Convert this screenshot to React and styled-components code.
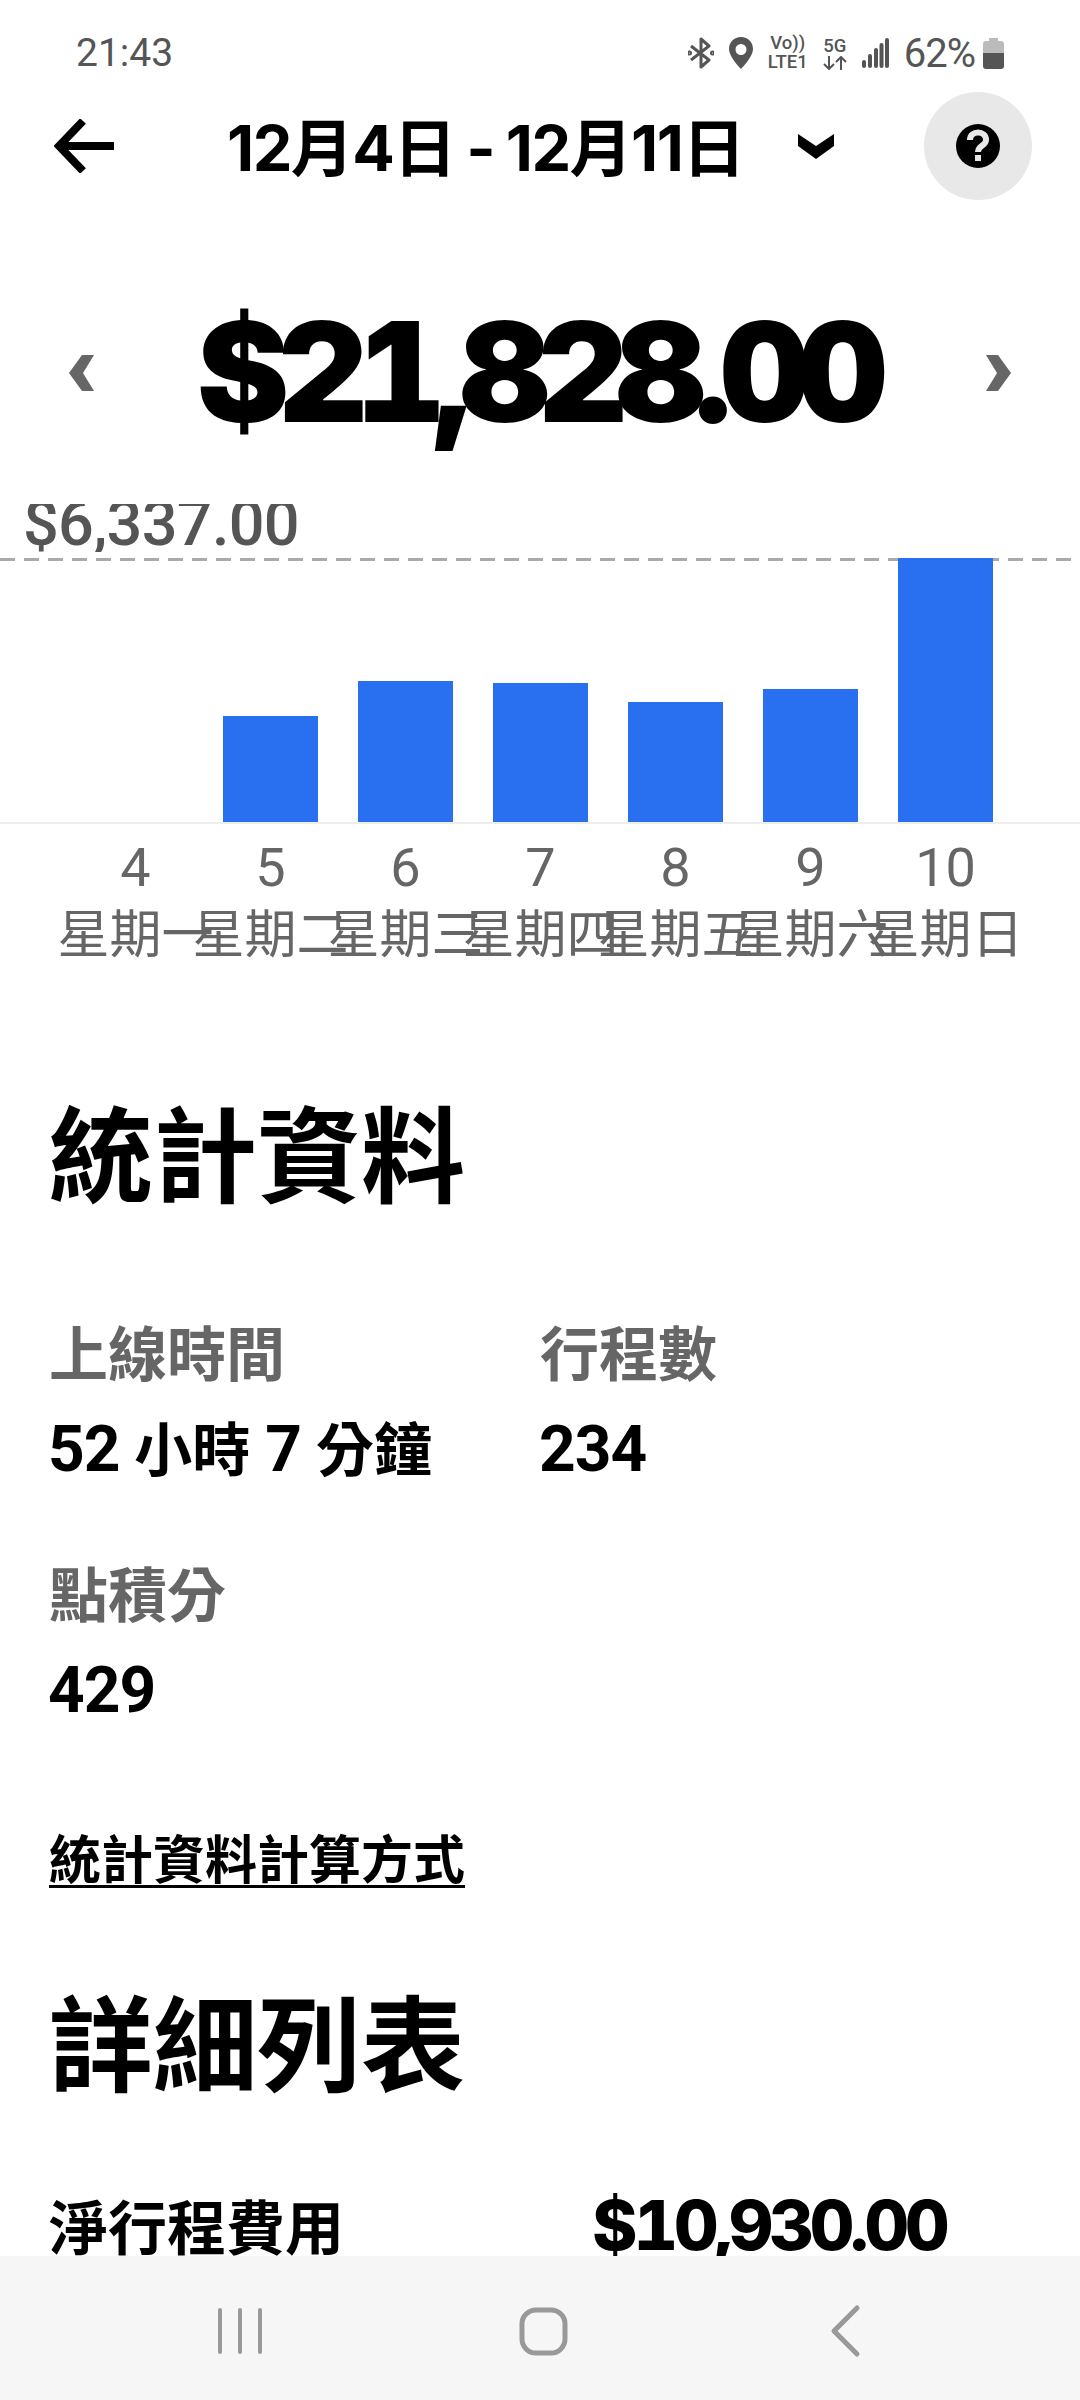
import React from "react";
import styled, { createGlobalStyle } from "styled-components";

const LATIN = `Inter, "Noto Sans CJK TC", sans-serif`;
const CJK = `"Noto Sans CJK TC", sans-serif`;

const Global = createGlobalStyle`
  html, body { margin: 0; padding: 0; background: #fff; }
  body { font-family: ${LATIN}; }
`;

const Screen = styled.div`
  width: 1080px;
  height: 2400px;
  display: flex;
  flex-direction: column;
  overflow: hidden;
  background: #fff;
`;

const Scroll = styled.main`
  flex: 1;
  min-height: 0;
  overflow: hidden;
`;

const StatusBar = styled.div`
  height: 92px;
  padding: 14px 76px 0 76px;
  box-sizing: border-box;
  display: flex;
  align-items: center;
  gap: 15px;
  color: #555;
`;

const Clock = styled.span`
  font: 400 39px Roboto, sans-serif;
  margin-right: auto;
`;

const Tiny = styled.div`
  display: flex;
  flex-direction: column;
  align-items: center;
  font: 500 18.5px/19px Roboto, sans-serif;
`;

const Battery = styled.span`
  font: 400 40px Roboto, sans-serif;
  letter-spacing: -1px;
`;

const BatteryIcon = styled.svg`
  margin-left: -7px;
`;

const Header = styled.header`
  height: 108px;
  padding: 0 48px 0 54px;
  display: flex;
  align-items: center;
`;

const Title = styled.h1`
  margin: 0 0 5px 113px;
  font: 700 63px ${LATIN};
  letter-spacing: -1.5px;
  word-spacing: -2px;
  color: #000;
  white-space: nowrap;
`;

const TitleCaret = styled.svg`
  margin-left: 54px;
`;

const HelpButton = styled.div`
  width: 108px;
  height: 108px;
  margin-left: auto;
  border-radius: 50%;
  background: #e8e8e8;
  display: flex;
  align-items: center;
  justify-content: center;
`;

const AmountRow = styled.div`
  margin-top: 100px;
  height: 146px;
  padding: 0 69px;
  display: flex;
  align-items: center;
  justify-content: space-between;
`;

const Amount = styled.div`
  margin: 0 7px 4px 0;
  font: 900 139px ${LATIN};
  font-feature-settings: "tnum";
  letter-spacing: -11.5px;
  color: #000;
`;

const Chart = styled.section`
  margin-top: 58px;
`;

const MaxLabel = styled.div`
  height: 48px;
  padding-left: 23px;
  overflow: hidden;
  font: 500 63px/40px Roboto, sans-serif;
  letter-spacing: -0.7px;
  color: #555;
`;

const Plot = styled.div`
  height: 264px;
  margin-top: 6px;
  padding: 0 68px;
  border-bottom: 2px solid #eee;
  background: repeating-linear-gradient(90deg, #aaa 0 15px, transparent 15px 24px) top left / 100% 3px no-repeat;
  display: grid;
  grid-template-columns: repeat(7, 135px);
  align-items: end;
`;

const Bar = styled.div`
  width: 95px;
  justify-self: center;
  background: #2970f0;
`;

const Axis = styled.div`
  padding: 0 68px;
  display: grid;
  grid-template-columns: repeat(7, 135px);
  margin-top: 14px;
`;

const Tick = styled.div`
  display: flex;
  flex-direction: column;
  align-items: center;
  color: #666;
  white-space: nowrap;
`;

const TickDay = styled.span`
  font: 400 54px/60px Roboto, sans-serif;
`;

const TickWeekday = styled.span`
  margin-top: 2px;
  font: 400 52px/62px ${CJK};
`;

const Section = styled.section`
  padding: 0 50px;
`;

const SectionTitle = styled.h2`
  margin: ${(p) => p.$top}px 0 0 -1px;
  font: 700 104px/120px ${CJK};
  color: #000;
`;

const Stats = styled.div`
  display: grid;
  grid-template-columns: 491px 1fr;
  row-gap: 65px;
  margin-top: 103px;
`;

const StatLabel = styled.div`
  margin-left: -1px;
  font: 700 59px/76px ${CJK};
  color: #666;
`;

const StatValue = styled.div`
  margin-top: 23px;
  margin-left: -2px;
  font: 700 64px/76px Roboto, ${CJK};
  letter-spacing: -1px;
  color: #000;
`;

const StatUnit = styled.span`
  font-size: 58px;
  letter-spacing: 0;
`;

const Link = styled.a`
  display: inline-block;
  margin: 99px 0 0 -1px;
  font: 700 52px/57px ${CJK};
  color: #000;
  border-bottom: 3px solid #000;
`;

const Row = styled.div`
  display: flex;
  margin-top: 88px;
  align-items: center;
  color: #000;
`;

const RowLabel = styled.span`
  width: 545px;
  margin-left: -1px;
  font: 700 59px/76px ${CJK};
`;

const RowValue = styled.span`
  margin-left: -2px;
  font: 800 69px/76px ${LATIN};
  font-feature-settings: "tnum";
  letter-spacing: -4.1px;
`;

const NavBar = styled.nav`
  flex: none;
  height: 144px;
  background: #f6f6f6;
`;

const NavIcons = styled.svg`
  display: block;
`;

const MAX_VALUE = 6337;
const BARS = [
  { day: 4, weekday: "星期一", value: 0 },
  { day: 5, weekday: "星期二", value: 2544 },
  { day: 6, weekday: "星期三", value: 3385 },
  { day: 7, weekday: "星期四", value: 3337 },
  { day: 8, weekday: "星期五", value: 2880 },
  { day: 9, weekday: "星期六", value: 3193 },
  { day: 10, weekday: "星期日", value: MAX_VALUE },
];

const PLOT_HEIGHT = 264;

const Chevron = ({ flip }) => (
  <svg width="25" height="36" viewBox="0 0 25 36">
    <path
      fill="#666"
      d={flip ? "M12 0 H0 L11 18 L0 36 H12 L25 18 Z" : "M13 0 H25 L14 18 L25 36 H13 L0 18 Z"}
    />
  </svg>
);

export default function App() {
  return (
    <Screen>
      <Global />
      <Scroll>
        <StatusBar>
          <Clock>21:43</Clock>
          <svg width="26" height="32" viewBox="0 0 26 32" fill="none" stroke="#555" strokeWidth="3">
            <path d="M3 9 L21 23 L13 30 L13 2 L21 9 L3 23" strokeLinejoin="round" />
            <circle cx="1.5" cy="16" r="1" />
            <circle cx="24.5" cy="16" r="1" />
          </svg>
          <svg width="24" height="32" viewBox="0 0 24 32">
            <path
              fillRule="evenodd"
              fill="#555"
              d="M12 0 C5 0 0 5 0 12 C0 20 12 32 12 32 C12 32 24 20 24 12 C24 5 19 0 12 0 Z M12 7 A5.5 5.5 0 1 1 12 18 A5.5 5.5 0 1 1 12 7 Z"
            />
          </svg>
          <Tiny>
            <span>Vo))</span>
            <span>LTE1</span>
          </Tiny>
          <Tiny>
            <span>5G</span>
            <svg width="24" height="14" viewBox="0 0 24 14" fill="none" stroke="#555" strokeWidth="2">
              <path d="M6 0 V13 M1 8 L6 13 L11 8 M18 14 V1 M13 6 L18 1 L23 6" />
            </svg>
          </Tiny>
          <svg width="27" height="30" viewBox="0 0 27 30" fill="#555">
            <rect x="0" y="22" width="4" height="8" rx="2" />
            <rect x="6" y="16" width="4" height="14" rx="2" />
            <rect x="12" y="10" width="4" height="20" rx="2" />
            <rect x="17.5" y="5" width="4" height="25" rx="2" />
            <rect x="23" y="0" width="4" height="30" rx="2" />
          </svg>
          <Battery>62%</Battery>
          <BatteryIcon width="21" height="31" viewBox="0 0 21 31">
            <path d="M6 0 H15 V3 H18 Q21 3 21 6 V15 H0 V6 Q0 3 3 3 H6 Z" fill="#bbb" />
            <path d="M0 15 H21 V28 Q21 31 18 31 H3 Q0 31 0 28 Z" fill="#555" />
          </BatteryIcon>
        </StatusBar>

        <Header>
          <svg width="60" height="54" viewBox="0 0 60 54" fill="none" stroke="#000" strokeWidth="8">
            <path d="M60 27 H6 M29 2 L5 27 L29 52" />
          </svg>
          <Title>12月4日 - 12月11日</Title>
          <TitleCaret width="36" height="25" viewBox="0 0 36 25">
            <path d="M0 0 L18 12 L36 0 V12 L18 25 L0 12 Z" fill="#000" />
          </TitleCaret>
          <HelpButton>
            <svg width="44" height="44" viewBox="0 0 44 44">
              <circle cx="22" cy="22" r="22" fill="#000" />
              <path d="M14 16 C14 6 30 6 30 16 C30 22 22 21 22 28" fill="none" stroke="#e8e8e8" strokeWidth="6" />
              <rect x="19" y="31" width="6" height="6" fill="#e8e8e8" />
            </svg>
          </HelpButton>
        </Header>

        <AmountRow>
          <Chevron />
          <Amount>$21,828.00</Amount>
          <Chevron flip />
        </AmountRow>

        <Chart>
          <MaxLabel>$6,337.00</MaxLabel>
          <Plot>
            {BARS.map((b) => (
              <Bar key={b.day} style={{ height: (b.value / MAX_VALUE) * PLOT_HEIGHT }} />
            ))}
          </Plot>
          <Axis>
            {BARS.map((b) => (
              <Tick key={b.day}>
                <TickDay>{b.day}</TickDay>
                <TickWeekday>{b.weekday}</TickWeekday>
              </Tick>
            ))}
          </Axis>
        </Chart>

        <Section>
          <SectionTitle $top={128}>統計資料</SectionTitle>
          <Stats>
            <div>
              <StatLabel>上線時間</StatLabel>
              <StatValue>
                52 <StatUnit>小時</StatUnit> 7 <StatUnit>分鐘</StatUnit>
              </StatValue>
            </div>
            <div>
              <StatLabel>行程數</StatLabel>
              <StatValue>234</StatValue>
            </div>
            <div>
              <StatLabel>點積分</StatLabel>
              <StatValue>429</StatValue>
            </div>
          </Stats>
          <Link>統計資料計算方式</Link>
          <SectionTitle $top={91}>詳細列表</SectionTitle>
          <Row>
            <RowLabel>淨行程費用</RowLabel>
            <RowValue>$10,930.00</RowValue>
          </Row>
        </Section>
      </Scroll>
      <NavBar>
        <NavIcons width="1080" height="144" viewBox="0 0 1080 144" fill="none" stroke="#999" strokeLinecap="round" strokeLinejoin="round">
          <path strokeWidth="4" d="M220 54 V96 M240 54 V96 M260 54 V96" />
          <rect strokeWidth="5" x="522" y="54" width="43" height="43" rx="14" />
          <path strokeWidth="5" d="M857 52 L834 75 L857 98" />
        </NavIcons>
      </NavBar>
    </Screen>
  );
}
